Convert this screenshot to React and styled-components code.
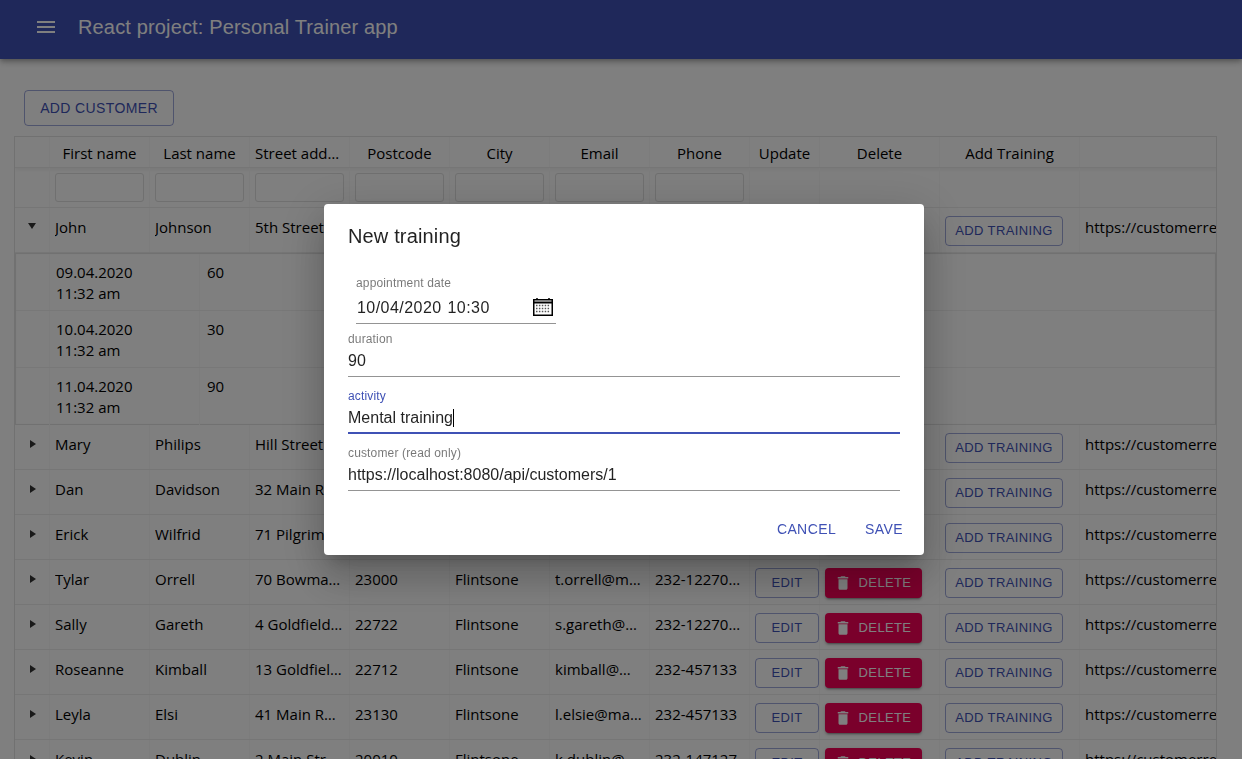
import React from "react";
import styled, { createGlobalStyle } from "styled-components";

const customers = [
  ["Mary", "Philips", "Hill Street 5", "", "", "", ""],
  ["Dan", "Davidson", "32 Main Road", "", "", "", ""],
  ["Erick", "Wilfrid", "71 Pilgrim Ave", "", "", "", ""],
  ["Tylar", "Orrell", "70 Bowman St", "23000", "Flintsone", "t.orrell@mail.com", "232-1227099"],
  ["Sally", "Gareth", "4 Goldfield Rd", "22722", "Flintsone", "s.gareth@mail.com", "232-1227044"],
  ["Roseanne", "Kimball", "13 Goldfield Rd", "22712", "Flintsone", "kimball@mail.com", "232-457133"],
  ["Leyla", "Elsi", "41 Main Road", "23130", "Flintsone", "l.elsie@mail.com", "232-457133"],
  ["Kevin", "Dublin", "2 Main Street", "20010", "Flintsone", "k.dublin@mail.com", "232-147127"]
];

const trainings = [
  ["09.04.2020", "60"],
  ["10.04.2020", "30"],
  ["11.04.2020", "90"]
];

const headers = ["First name", "Last name", "Street address", "Postcode", "City", "Email", "Phone"];

const TrashIcon = () => (
  <svg width="18" height="18" viewBox="0 0 24 24" fill="currentColor">
    <path d="M6 19c0 1.1.9 2 2 2h8c1.1 0 2-.9 2-2V7H6v12zM19 4h-3.5l-1-1h-5l-1 1H5v2h14V4z" />
  </svg>
);

const Row = ({ data, open }) => (
  <DataRow>
    <ExpandCell>
      <Arrow open={open} />
    </ExpandCell>
    {data.map((value, i) => (
      <TextCell key={i}>
        <Clip>{value}</Clip>
      </TextCell>
    ))}
    <UpdateCell>
      <OutlineButton width="64">Edit</OutlineButton>
    </UpdateCell>
    <DeleteCell>
      <DeleteButton>
        <TrashIcon />
        Delete
      </DeleteButton>
    </DeleteCell>
    <TrainingCell>
      <OutlineButton width="118">Add training</OutlineButton>
    </TrainingCell>
    <LinkCell>https://customerrest.herokuapp.com/api/customers/1</LinkCell>
  </DataRow>
);

const CalendarIcon = () => (
  <svg width="20" height="18" viewBox="0 0 20 18">
    <path d="M4 0v2M16 0v2" stroke="#000" strokeWidth="1.5" />
    <rect x="0.75" y="1.75" width="18.5" height="15.5" fill="none" stroke="#000" strokeWidth="1.5" />
    <path d="M1 4.5h18" stroke="#000" strokeWidth="2" />
    <path
      d="M3 7.5h14M3 10.5h14M3 13.5h14"
      stroke="#555"
      strokeWidth="1.4"
      strokeDasharray="1.5 1.4"
    />
  </svg>
);

export default function App() {
  return (
    <>
      <GlobalStyle />
      <AppBar>
        <MenuIcon width="24" height="24" viewBox="0 0 24 24">
          <path d="M3 18h18v-2H3v2zm0-5h18v-2H3v2zm0-7v2h18V6H3z" fill="#fff" />
        </MenuIcon>
        <AppTitle>React project: Personal Trainer app</AppTitle>
      </AppBar>
      <Toolbar>
        <OutlineButton width="150" tall>
          Add customer
        </OutlineButton>
      </Toolbar>
      <Grid>
        <HeaderRow>
          <ExpandCell />
          {headers.map((h) => (
            <HeaderCell key={h}>{h}</HeaderCell>
          ))}
          <UpdateHeader>Update</UpdateHeader>
          <DeleteHeader>Delete</DeleteHeader>
          <TrainingHeader>Add Training</TrainingHeader>
          <LinkCell />
        </HeaderRow>
        <FilterRow>
          <ExpandCell />
          {headers.map((h) => (
            <FilterCell key={h}>
              <FilterInput />
            </FilterCell>
          ))}
          <UpdateCell />
          <DeleteCell />
          <TrainingCell />
          <LinkCell />
        </FilterRow>
        <Row open data={["John", "Johnson", "5th Street", "", "", "", ""]} />
        <Details>
          {trainings.map(([date, duration]) => (
            <DetailRow key={date}>
              <DetailSpacer />
              <DetailDate>
                {date}
                <br />
                11:32 am
              </DetailDate>
              <DetailDuration>{duration}</DetailDuration>
            </DetailRow>
          ))}
        </Details>
        {customers.map((c) => (
          <Row key={c[0]} data={c} />
        ))}
      </Grid>
      <Backdrop />
      <Dialog>
        <DialogTitle>New training</DialogTitle>
        <DialogBody>
          <DateField>
            <DateLabel>appointment date</DateLabel>
            <DateValue>
              <DateText>10/04/2020 10:30</DateText>
              <CalendarIcon />
            </DateValue>
          </DateField>
          <Field>
            <FieldLabel>duration</FieldLabel>
            <FieldValue>90</FieldValue>
          </Field>
          <Field focused>
            <FieldLabel focused>activity</FieldLabel>
            <FieldValue>
              Mental training
              <Caret />
            </FieldValue>
          </Field>
          <Field>
            <FieldLabel>customer (read only)</FieldLabel>
            <FieldValue>https://localhost:8080/api/customers/1</FieldValue>
          </Field>
        </DialogBody>
        <DialogActions>
          <TextButton>Cancel</TextButton>
          <TextButton>Save</TextButton>
        </DialogActions>
      </Dialog>
    </>
  );
}

const GlobalStyle = createGlobalStyle`
  html, body {
    margin: 0;
    height: 100%;
    overflow: hidden;
    background: #fff;
    font-family: "Liberation Sans", Arial, sans-serif;
  }
`;

const AppBar = styled.header`
  display: flex;
  align-items: center;
  height: 59px;
  padding: 0 24px 5px;
  box-sizing: border-box;
  background: #3f51b5;
  box-shadow: 0 2px 4px -1px rgba(0, 0, 0, 0.2), 0 4px 5px 0 rgba(0, 0, 0, 0.14),
    0 1px 10px 0 rgba(0, 0, 0, 0.12);
`;

const MenuIcon = styled.svg`
  margin: 0 20px 0 10px;
  flex: none;
`;

const AppTitle = styled.h1`
  margin: 0;
  font-size: 20px;
  font-weight: 400;
  letter-spacing: 0.15px;
  color: #fff;
`;

const Toolbar = styled.div`
  display: flex;
  padding: 31px 24px 10px;
`;

const OutlineButton = styled.button`
  box-sizing: border-box;
  width: ${(p) => p.width}px;
  height: ${(p) => (p.tall ? 36 : 30)}px;
  padding: 0 0 1px;
  border: 1px solid rgba(63, 81, 181, 0.5);
  border-radius: 4px;
  background: transparent;
  color: #3f51b5;
  font-family: "Liberation Sans", Arial, sans-serif;
  font-size: ${(p) => (p.tall ? 14 : 13)}px;
  letter-spacing: 0.37px;
  text-transform: uppercase;
`;

const DeleteButton = styled.button`
  display: flex;
  align-items: center;
  justify-content: center;
  gap: 7px;
  box-sizing: border-box;
  width: 97px;
  height: 30px;
  padding: 0 2px 1px 0;
  border: 0;
  border-radius: 4px;
  background: #f50057;
  color: #fff;
  font-family: "Liberation Sans", Arial, sans-serif;
  font-size: 13px;
  letter-spacing: 0.37px;
  text-transform: uppercase;
  box-shadow: 0 3px 1px -2px rgba(0, 0, 0, 0.2), 0 2px 2px 0 rgba(0, 0, 0, 0.14),
    0 1px 5px 0 rgba(0, 0, 0, 0.12);
`;

const Grid = styled.div`
  width: 1203px;
  height: 640px;
  margin-left: 14px;
  box-sizing: border-box;
  border: 1px solid #e2e2e2;
  border-bottom: 0;
  overflow: hidden;
  font-family: "Open Sans", sans-serif;
  font-size: 15px;
  color: #000;
`;

const BaseRow = styled.div`
  display: flex;
  width: 1300px;
  box-sizing: border-box;
  border-bottom: 1px solid #ececec;
`;

const HeaderRow = styled(BaseRow)`
  height: 31px;
  align-items: stretch;
  box-shadow: 0 2px 4px rgba(0, 0, 0, 0.06);
`;

const FilterRow = styled(BaseRow)`
  height: 40px;
`;

const DataRow = styled(BaseRow)`
  height: 45px;
`;

const ColumnBase = styled.div`
  flex: none;
  box-sizing: border-box;
  border-right: 1px solid #f8f8f8;
`;

const ExpandCell = styled(ColumnBase)`
  width: 35px;
  display: flex;
  justify-content: center;
  padding-top: 15px;
`;

const Arrow = styled.span`
  width: 0;
  height: 0;
  ${(p) =>
    p.open
      ? `border-left: 4.5px solid transparent;
         border-right: 4.5px solid transparent;
         border-top: 6px solid #333;`
      : `margin-left: 1px;
         border-top: 4.5px solid transparent;
         border-bottom: 4.5px solid transparent;
         border-left: 6px solid #333;`}
`;

const TextCell = styled(ColumnBase)`
  width: 100px;
  padding: 8px 5px 0;
  line-height: 22px;
`;

const Clip = styled.div`
  overflow: hidden;
  white-space: nowrap;
  text-overflow: ellipsis;
`;

const HeaderCell = styled(ColumnBase)`
  width: 100px;
  padding: 0 5px;
  text-align: center;
  line-height: 33px;
  white-space: nowrap;
  overflow: hidden;
  text-overflow: ellipsis;
`;

const FilterCell = styled(ColumnBase)`
  width: 100px;
  padding: 5px;
`;

const FilterInput = styled.div`
  height: 29px;
  box-sizing: border-box;
  border: 1px solid #e0e0e0;
  border-radius: 3px;
`;

const UpdateCell = styled(ColumnBase)`
  width: 70px;
  padding: 8px 0 0 5px;
`;

const DeleteCell = styled(ColumnBase)`
  width: 120px;
  padding: 8px 0 0 5px;
`;

const TrainingCell = styled(ColumnBase)`
  width: 140px;
  padding: 8px 0 0 5px;
`;

const UpdateHeader = styled(HeaderCell)`
  width: 70px;
`;

const DeleteHeader = styled(HeaderCell)`
  width: 120px;
`;

const TrainingHeader = styled(HeaderCell)`
  width: 140px;
`;

const LinkCell = styled.div`
  flex: none;
  width: 137px;
  padding: 8px 0 0 5px;
  line-height: 22px;
  overflow: hidden;
  white-space: nowrap;
  box-sizing: border-box;
`;

const Details = styled.div`
  box-sizing: border-box;
  height: 172px;
  border: 1px solid #e2e2e2;
  box-shadow: inset 0 0 2px rgba(0, 0, 0, 0.05);
`;

const DetailRow = styled.div`
  display: flex;
  height: 57px;
  box-sizing: border-box;
  border-bottom: 1px solid #f0f0f0;

  &:last-child {
    border-bottom: 0;
  }
`;

const DetailSpacer = styled.div`
  box-sizing: border-box;
  width: 34px;
  border-right: 1px solid #f8f8f8;
`;

const DetailDate = styled.div`
  box-sizing: border-box;
  width: 150px;
  padding: 8px 0 0 6px;
  line-height: 21px;
  border-right: 1px solid #f8f8f8;
`;

const DetailDuration = styled.div`
  box-sizing: border-box;
  width: 60px;
  padding: 8px 0 0 7px;
  line-height: 21px;
`;

const Backdrop = styled.div`
  position: fixed;
  inset: 0;
  background: rgba(0, 0, 0, 0.5);
`;

const Dialog = styled.div`
  position: fixed;
  left: 324px;
  top: 204px;
  width: 600px;
  height: 351px;
  box-sizing: border-box;
  background: #fff;
  border-radius: 4px;
  box-shadow: 0 11px 15px -7px rgba(0, 0, 0, 0.2), 0 24px 38px 3px rgba(0, 0, 0, 0.14),
    0 9px 46px 8px rgba(0, 0, 0, 0.12);
`;

const DialogTitle = styled.h2`
  margin: 0;
  padding: 20px 24px 16px;
  font-size: 20px;
  line-height: 24px;
  font-weight: 400;
  letter-spacing: 0.15px;
  color: rgba(0, 0, 0, 0.87);
`;

const DialogBody = styled.div`
  display: flex;
  flex-direction: column;
  padding: 0 24px;
`;

const Field = styled.div`
  height: 57px;
  box-sizing: border-box;
  display: flex;
  flex-direction: column;
  justify-content: flex-end;
  border-bottom: 1px solid ${(p) => (p.focused ? "#3f51b5" : "#949494")};
  box-shadow: ${(p) => (p.focused ? "inset 0 -1px 0 #3f51b5" : "none")};
`;

const DateField = styled(Field)`
  width: 200px;
  height: 60px;
  margin: 0 0 -4px 8px;
`;

const FieldLabel = styled.label`
  margin-bottom: -2px;
  font-size: 12px;
  line-height: 14px;
  letter-spacing: 0.15px;
  color: ${(p) => (p.focused ? "#3f51b5" : "rgba(0, 0, 0, 0.54)")};
`;

const DateLabel = styled(FieldLabel)`
  margin-bottom: 1px;
`;

const FieldValue = styled.div`
  display: flex;
  align-items: center;
  box-sizing: border-box;
  height: 32px;
  padding-top: 2px;
  font-size: 16px;
  color: rgba(0, 0, 0, 0.87);
`;

const DateValue = styled(FieldValue)`
  justify-content: space-between;
  padding: 0 3px 0 1px;
`;

const DateText = styled.span`
  padding-top: 1px;
  letter-spacing: 0.45px;
  word-spacing: 1px;
`;

const Caret = styled.span`
  width: 1px;
  height: 18px;
  background: #000;
`;

const DialogActions = styled.div`
  position: absolute;
  right: 13px;
  bottom: 8px;
  display: flex;
`;

const TextButton = styled.button`
  padding: 6px 8px;
  margin-left: 13px;
  border: 0;
  background: none;
  color: #3f51b5;
  font-family: "Liberation Sans", Arial, sans-serif;
  font-size: 14px;
  line-height: 24px;
  letter-spacing: 0.4px;
  text-transform: uppercase;
`;
